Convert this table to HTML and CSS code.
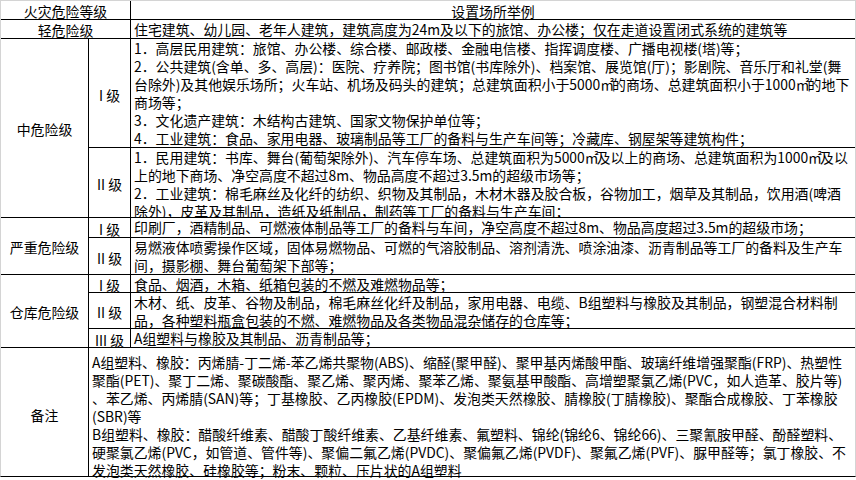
FILE: index.html
```html
<!DOCTYPE html>
<html lang="zh-CN">
<head>
<meta charset="utf-8">
<title>火灾危险等级</title>
<link rel="stylesheet" href="styles.css">
</head>
<body>
<div class="sheet">
  <div class="cell label span2">火灾危险等级</div>
  <div class="cell label">设置场所举例</div>

  <div class="cell label span2">轻危险级</div>
  <div class="cell text">住宅建筑、幼儿园、老年人建筑，建筑高度为24m及以下的旅馆、办公楼；仅在走道设置闭式系统的建筑等</div>

  <div class="cell label rows2">中危险级</div>
  <div class="cell label grade">I 级</div>
  <div class="cell text">1．高层民用建筑：旅馆、办公楼、综合楼、邮政楼、金融电信楼、指挥调度楼、广播电视楼(塔)等；<br>2．公共建筑(含单、多、高层)：医院、疗养院；图书馆(书库除外)、档案馆、展览馆(厅)；影剧院、音乐厅和礼堂(舞<br>台除外)及其他娱乐场所；火车站、机场及码头的建筑；总建筑面积小于5000<span class="sq">㎡</span>的商场、总建筑面积小于1000<span class="sq">㎡</span>的地下<br>商场等；<br>3．文化遗产建筑：木结构古建筑、国家文物保护单位等；<br>4．工业建筑：食品、家用电器、玻璃制品等工厂的备料与生产车间等；冷藏库、钢屋架等建筑构件；</div>
  <div class="cell label grade">II 级</div>
  <div class="cell text">1．民用建筑：书库、舞台(葡萄架除外)、汽车停车场、总建筑面积为5000<span class="sq">㎡</span>及以上的商场、总建筑面积为1000<span class="sq">㎡</span>及以<br>上的地下商场、净空高度不超过8m、物品高度不超过3.5m的超级市场等；<br>2．工业建筑：棉毛麻丝及化纤的纺织、织物及其制品，木材木器及胶合板，谷物加工，烟草及其制品，饮用酒(啤酒<br>除外)，皮革及其制品，造纸及纸制品，制药等工厂的备料与生产车间；</div>

  <div class="cell label rows2">严重危险级</div>
  <div class="cell label grade">I 级</div>
  <div class="cell text">印刷厂，酒精制品、可燃液体制品等工厂的备料与车间，净空高度不超过8m、物品高度超过3.5m的超级市场；</div>
  <div class="cell label grade">II 级</div>
  <div class="cell text">易燃液体喷雾操作区域，固体易燃物品、可燃的气溶胶制品、溶剂清洗、喷涂油漆、沥青制品等工厂的备料及生产车<br>间，摄影棚、舞台葡萄架下部等；</div>

  <div class="cell label rows3">仓库危险级</div>
  <div class="cell label grade">I 级</div>
  <div class="cell text">食品、烟酒，木箱、纸箱包装的不燃及难燃物品等；</div>
  <div class="cell label grade">II 级</div>
  <div class="cell text">木材、纸、皮革、谷物及制品，棉毛麻丝化纤及制品，家用电器、电缆、B组塑料与橡胶及其制品，钢塑混合材料制<br>品，各种塑料瓶盒包装的不燃、难燃物品及各类物品混杂储存的仓库等；</div>
  <div class="cell label grade">III 级</div>
  <div class="cell text">A组塑料与橡胶及其制品、沥青制品等；</div>

  <div class="cell label note">备注</div>
  <div class="cell text note-text">A组塑料、橡胶：丙烯腈-丁二烯-苯乙烯共聚物(ABS)、缩醛(聚甲醛)、聚甲基丙烯酸甲酯、玻璃纤维增强聚酯(FRP)、热塑性<br>聚酯(PET)、聚丁二烯、聚碳酸酯、聚乙烯、聚丙烯、聚苯乙烯、聚氨基甲酸酯、高增塑聚氯乙烯(PVC，如人造革、胶片等)<br>、苯乙烯、丙烯腈(SAN)等；丁基橡胶、乙丙橡胶(EPDM)、发泡类天然橡胶、腈橡胶(丁腈橡胶)、聚酯合成橡胶、丁苯橡胶<br>(SBR)等<br>B组塑料、橡胶：醋酸纤维素、醋酸丁酸纤维素、乙基纤维素、氟塑料、锦纶(锦纶6、锦纶66)、三聚氰胺甲醛、酚醛塑料、<br>硬聚氯乙烯(PVC，如管道、管件等)、聚偏二氟乙烯(PVDC)、聚偏氟乙烯(PVDF)、聚氟乙烯(PVF)、脲甲醛等；氯丁橡胶、不<br>发泡类天然橡胶、硅橡胶等；粉末、颗粒、压片状的A组塑料</div>
</div>
</body>
</html>
```

FILE: styles.css
```css
html, body {
  margin: 0;
  padding: 0;
  background: #ffffff;
}

body {
  width: 856px;
  height: 480px;
  overflow: hidden;
  font-family: "Noto Sans CJK SC", "Noto Sans", sans-serif;
  font-size: 13.9px;
  color: #000000;
}

.sheet {
  box-sizing: border-box;
  width: 856px;
  display: grid;
  grid-template-columns: 87px 41px 1fr;
  grid-template-rows: 18px 18px 108px 69px 19px 36px 17px 35px 18px 128px;
  gap: 1px;
  background: #000000;
  border-top: 1px solid #d4d4d4;
  border-left: 1px solid #d4d4d4;
  border-right: 1px solid #d4d4d4;
  border-bottom: 1px solid #000000;
}

.cell {
  box-sizing: border-box;
  background: #ffffff;
  line-height: 18px;
  white-space: nowrap;
  min-width: 0;
  min-height: 0;
}

.label {
  display: flex;
  align-items: center;
  justify-content: center;
  padding-top: 2px;
}

.grade {
  padding-top: 3px;
}

.span2 {
  grid-column: span 2;
}

.rows2 {
  grid-row: span 2;
}

.rows3 {
  grid-row: span 3;
}

.text {
  padding-left: 3px;
}

.sq {
  letter-spacing: -2px;
}

.note {
  padding-top: 5px;
}

.note-text {
  grid-column: span 2;
  padding-top: 5px;
}
```
